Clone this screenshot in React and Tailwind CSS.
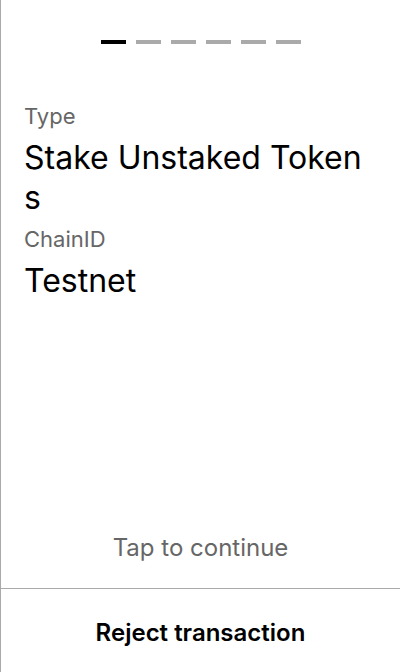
export default function App() {
    const steps = [0, 1, 2, 3, 4, 5];
    const fields = [
        { label: "Type", value: "Stake Unstaked Tokens" },
        { label: "ChainID", value: "Testnet" },
    ];

    return (
        <div
            className="h-[672px] w-[400px] flex flex-col bg-white border-l border-[#aaaaaa] text-black"
            style={{ fontFamily: "Inter, 'Noto Sans', sans-serif" }}
        >
            {/* Progress */}
            <div className="flex justify-center gap-[10px] pt-10">
                {steps.map((i) => (
                    <div
                        key={i}
                        className={`h-1 w-[25px] ${i === 0 ? "bg-black" : "bg-[#aaaaaa]"}`}
                    />
                ))}
            </div>

            {/* Fields */}
            <div className="flex flex-col pl-[23px] pr-6 pt-[57px]">
                {fields.map((f) => (
                    <div key={f.label} className="flex flex-col mb-[6px]">
                        <div className="text-[22px] leading-[30px] text-[#666666]">{f.label}</div>
                        <div className="text-[32px] leading-10 break-all mt-[7px]">{f.value}</div>
                    </div>
                ))}
            </div>

            <div className="flex-1" />

            {/* Footer */}
            <div className="text-center text-[24px] leading-[30px] text-[#666666] pb-[25px]">
                Tap to continue
            </div>
            <div className="border-t border-[#aaaaaa] h-[84px] flex items-center justify-center">
                <span className="text-[24px] font-semibold pt-[4px]">Reject transaction</span>
            </div>
        </div>
    );
}
